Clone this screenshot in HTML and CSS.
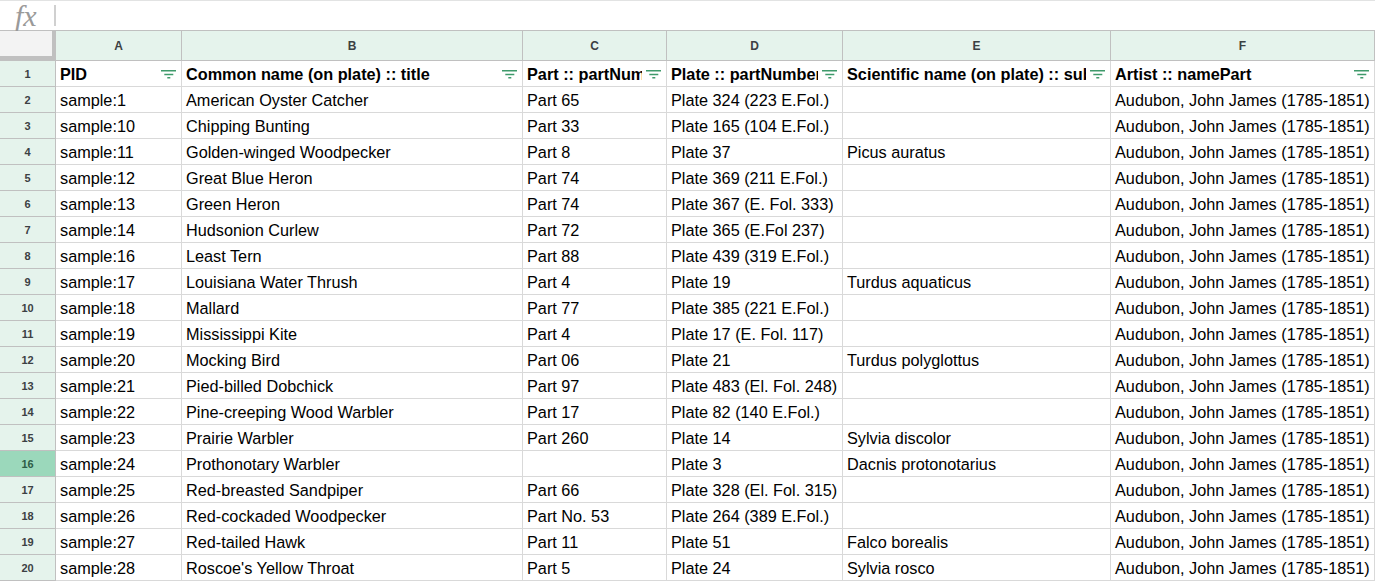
FILE: index.html
```html
<!DOCTYPE html>
<html lang="en">
<head>
<meta charset="utf-8">
<title>Sheet</title>
<link rel="stylesheet" href="styles.css">
</head>
<body>
<svg class="defs" width="0" height="0" aria-hidden="true"><defs><symbol id="filter" viewBox="0 0 15 9"><path d="M0 .75h15M3.3 4.5h9M6.3 7.75h3" fill="none" stroke="currentColor" stroke-width="1.5"/></symbol></defs></svg>
<div class="fxbar"><span class="fx">fx</span><span class="fxdiv"></span></div>
<div class="sheet">
<div class="corner"></div><div class="colh">A</div><div class="colh">B</div><div class="colh">C</div><div class="colh">D</div><div class="colh">E</div><div class="colh">F</div>
<div class="rowh">1</div>
<div class="cell head"><span class="clip">PID</span><svg class="ficon"><use href="#filter"/></svg></div>
<div class="cell head"><span class="clip">Common name (on plate) :: title</span><svg class="ficon"><use href="#filter"/></svg></div>
<div class="cell head"><span class="clip">Part :: partNumber</span><svg class="ficon"><use href="#filter"/></svg></div>
<div class="cell head"><span class="clip">Plate :: partNumber</span><svg class="ficon"><use href="#filter"/></svg></div>
<div class="cell head"><span class="clip">Scientific name (on plate) :: subject</span><svg class="ficon"><use href="#filter"/></svg></div>
<div class="cell head"><span class="clip">Artist :: namePart</span><svg class="ficon"><use href="#filter"/></svg></div>
<div class="rowh">2</div><div class="cell">sample:1</div><div class="cell">American Oyster Catcher</div><div class="cell">Part 65</div><div class="cell">Plate 324 (223 E.Fol.)</div><div class="cell"></div><div class="cell">Audubon, John James (1785-1851)</div>
<div class="rowh">3</div><div class="cell">sample:10</div><div class="cell">Chipping Bunting</div><div class="cell">Part 33</div><div class="cell">Plate 165 (104 E.Fol.)</div><div class="cell"></div><div class="cell">Audubon, John James (1785-1851)</div>
<div class="rowh">4</div><div class="cell">sample:11</div><div class="cell">Golden-winged Woodpecker</div><div class="cell">Part 8</div><div class="cell">Plate 37</div><div class="cell">Picus auratus</div><div class="cell">Audubon, John James (1785-1851)</div>
<div class="rowh">5</div><div class="cell">sample:12</div><div class="cell">Great Blue Heron</div><div class="cell">Part 74</div><div class="cell">Plate 369 (211 E.Fol.)</div><div class="cell"></div><div class="cell">Audubon, John James (1785-1851)</div>
<div class="rowh">6</div><div class="cell">sample:13</div><div class="cell">Green Heron</div><div class="cell">Part 74</div><div class="cell">Plate 367 (E. Fol. 333)</div><div class="cell"></div><div class="cell">Audubon, John James (1785-1851)</div>
<div class="rowh">7</div><div class="cell">sample:14</div><div class="cell">Hudsonion Curlew</div><div class="cell">Part 72</div><div class="cell">Plate 365 (E.Fol 237)</div><div class="cell"></div><div class="cell">Audubon, John James (1785-1851)</div>
<div class="rowh">8</div><div class="cell">sample:16</div><div class="cell">Least Tern</div><div class="cell">Part 88</div><div class="cell">Plate 439 (319 E.Fol.)</div><div class="cell"></div><div class="cell">Audubon, John James (1785-1851)</div>
<div class="rowh">9</div><div class="cell">sample:17</div><div class="cell">Louisiana Water Thrush</div><div class="cell">Part 4</div><div class="cell">Plate 19</div><div class="cell">Turdus aquaticus</div><div class="cell">Audubon, John James (1785-1851)</div>
<div class="rowh">10</div><div class="cell">sample:18</div><div class="cell">Mallard</div><div class="cell">Part 77</div><div class="cell">Plate 385 (221 E.Fol.)</div><div class="cell"></div><div class="cell">Audubon, John James (1785-1851)</div>
<div class="rowh">11</div><div class="cell">sample:19</div><div class="cell">Mississippi Kite</div><div class="cell">Part 4</div><div class="cell">Plate 17 (E. Fol. 117)</div><div class="cell"></div><div class="cell">Audubon, John James (1785-1851)</div>
<div class="rowh">12</div><div class="cell">sample:20</div><div class="cell">Mocking Bird</div><div class="cell">Part 06</div><div class="cell">Plate 21</div><div class="cell">Turdus polyglottus</div><div class="cell">Audubon, John James (1785-1851)</div>
<div class="rowh">13</div><div class="cell">sample:21</div><div class="cell">Pied-billed Dobchick</div><div class="cell">Part 97</div><div class="cell">Plate 483 (El. Fol. 248)</div><div class="cell"></div><div class="cell">Audubon, John James (1785-1851)</div>
<div class="rowh">14</div><div class="cell">sample:22</div><div class="cell">Pine-creeping Wood Warbler</div><div class="cell">Part 17</div><div class="cell">Plate 82 (140 E.Fol.)</div><div class="cell"></div><div class="cell">Audubon, John James (1785-1851)</div>
<div class="rowh">15</div><div class="cell">sample:23</div><div class="cell">Prairie Warbler</div><div class="cell">Part 260</div><div class="cell">Plate 14</div><div class="cell">Sylvia discolor</div><div class="cell">Audubon, John James (1785-1851)</div>
<div class="rowh active">16</div><div class="cell">sample:24</div><div class="cell">Prothonotary Warbler</div><div class="cell"></div><div class="cell">Plate 3</div><div class="cell">Dacnis protonotarius</div><div class="cell">Audubon, John James (1785-1851)</div>
<div class="rowh">17</div><div class="cell">sample:25</div><div class="cell">Red-breasted Sandpiper</div><div class="cell">Part 66</div><div class="cell">Plate 328 (El. Fol. 315)</div><div class="cell"></div><div class="cell">Audubon, John James (1785-1851)</div>
<div class="rowh">18</div><div class="cell">sample:26</div><div class="cell">Red-cockaded Woodpecker</div><div class="cell">Part No. 53</div><div class="cell">Plate 264 (389 E.Fol.)</div><div class="cell"></div><div class="cell">Audubon, John James (1785-1851)</div>
<div class="rowh">19</div><div class="cell">sample:27</div><div class="cell">Red-tailed Hawk</div><div class="cell">Part 11</div><div class="cell">Plate 51</div><div class="cell">Falco borealis</div><div class="cell">Audubon, John James (1785-1851)</div>
<div class="rowh">20</div><div class="cell">sample:28</div><div class="cell">Roscoe's Yellow Throat</div><div class="cell">Part 5</div><div class="cell">Plate 24</div><div class="cell">Sylvia rosco</div><div class="cell">Audubon, John James (1785-1851)</div>
</div>
</body>
</html>
```
FILE: styles.css
```css
* { box-sizing: border-box; }
html, body { margin: 0; padding: 0; height: 581px; overflow: hidden; background: #fff; }
body { font-family: "Liberation Sans", Arial, sans-serif; color: #000; }
.defs { position: absolute; }
.fxbar {
  height: 31px;
  border-top: 1px solid #e2e3e3;
  border-bottom: 1px solid #c0c0c0;
  display: flex;
  align-items: center;
  padding-left: 15px;
}
.fx {
  font-family: "Liberation Serif", serif;
  font-style: italic;
  font-size: 30px;
  line-height: 29px;
  color: #9a9a9a;
  width: 39px;
}
.fxdiv { width: 2px; height: 21px; background: #d0d0d0; }
.sheet {
  display: grid;
  grid-template-columns: 56px 126px 341px 144px 176px 268px 264px;
  grid-template-rows: 30px repeat(20, 26px);
}
.corner {
  background: #f3f3f3;
  border-right: 4px solid #c0c0c0;
  border-bottom: 5px solid #c0c0c0;
}
.colh, .rowh {
  background: #e5f3ec;
  color: #3c4043;
  font-weight: 700;
  font-size: 11px;
  display: flex;
  align-items: center;
  justify-content: center;
  border-right: 1px solid #c0c0c0;
  border-bottom: 1px solid #c0c0c0;
}
.colh { font-size: 12px; }
.rowh.active { background: #9bd8bb; color: #2f5d47; }
.cell {
  font-size: 16.25px;
  line-height: 25px;
  padding: 1px 4px 0;
  border-right: 1px solid #d9d9d9;
  border-bottom: 1px solid #d9d9d9;
  white-space: nowrap;
  overflow: hidden;
}
.head { font-weight: 700; display: flex; justify-content: space-between; padding-right: 5px; }
.clip { overflow: hidden; flex: 1 1 auto; min-width: 0; }
.ficon { width: 15px; height: 9px; flex: none; margin-top: 8px; color: #3f9a6b; margin-left: 4px; }
```
